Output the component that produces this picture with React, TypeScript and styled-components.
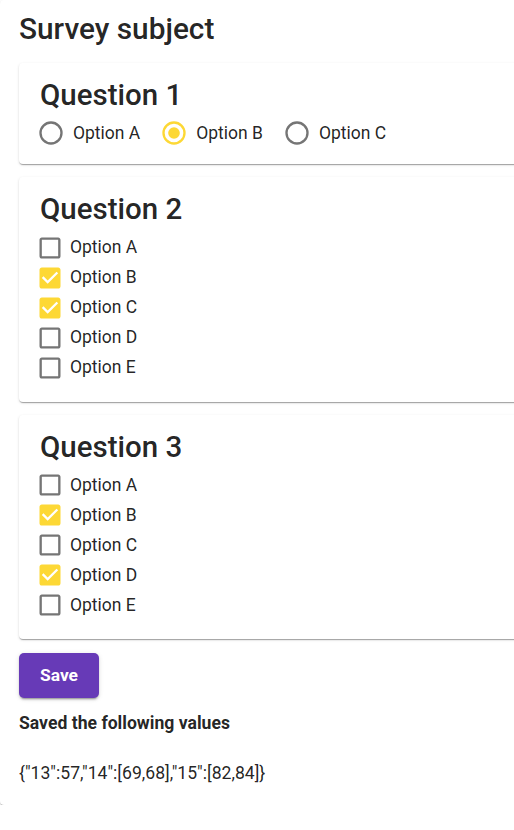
import styled, { createGlobalStyle } from 'styled-components';

const GlobalStyle = createGlobalStyle`
  html, body {
    margin: 0;
    padding: 0;
    overflow: hidden;
    background: #fff;
  }
  body {
    font-family: Roboto, "Noto Sans", sans-serif;
    color: rgba(0, 0, 0, 0.87);
  }
`;

const YELLOW = '#fdd835';
const GREY = '#757575';

interface Question {
  id: number;
  title: string;
  kind: 'radio' | 'checkbox';
  options: { id: number; label: string }[];
}

const questions: Question[] = [
  {
    id: 13,
    title: 'Question 1',
    kind: 'radio',
    options: [
      { id: 56, label: 'Option A' },
      { id: 57, label: 'Option B' },
      { id: 58, label: 'Option C' },
    ],
  },
  {
    id: 14,
    title: 'Question 2',
    kind: 'checkbox',
    options: [
      { id: 67, label: 'Option A' },
      { id: 68, label: 'Option B' },
      { id: 69, label: 'Option C' },
      { id: 70, label: 'Option D' },
      { id: 71, label: 'Option E' },
    ],
  },
  {
    id: 15,
    title: 'Question 3',
    kind: 'checkbox',
    options: [
      { id: 81, label: 'Option A' },
      { id: 82, label: 'Option B' },
      { id: 83, label: 'Option C' },
      { id: 84, label: 'Option D' },
      { id: 85, label: 'Option E' },
    ],
  },
];

const answers: Record<number, number | number[]> = {
  13: 57,
  14: [69, 68],
  15: [82, 84],
};

const isChecked = (qid: number, oid: number) => {
  const a = answers[qid];
  return Array.isArray(a) ? a.includes(oid) : a === oid;
};

const RadioIcon = ({ checked }: { checked: boolean }) => (
  <IconSvg viewBox="0 0 24 24">
    <circle cx="12" cy="12" r="9" fill="none" stroke={checked ? YELLOW : GREY} strokeWidth="2" />
    {checked && <circle cx="12" cy="12" r="5" fill={YELLOW} />}
  </IconSvg>
);

const CheckIcon = ({ checked }: { checked: boolean }) => (
  <IconSvg viewBox="0 0 24 24">
    {checked ? (
      <path
        fill={YELLOW}
        d="M19 3H5c-1.11 0-2 .9-2 2v14c0 1.1.89 2 2 2h14c1.11 0 2-.9 2-2V5c0-1.1-.89-2-2-2zm-9 14l-5-5 1.41-1.41L10 14.170l7.59-7.59L19 8l-9 9z"
      />
    ) : (
      <path
        fill={GREY}
        d="M19 5v14H5V5h14m0-2H5c-1.1 0-2 .9-2 2v14c0 1.1.9 2 2 2h14c1.1 0 2-.9 2-2V5c0-1.1-.9-2-2-2z"
      />
    )}
  </IconSvg>
);

const App = () => {
  return (
    <>
      <GlobalStyle />
      <Page>
        <Title>Survey subject</Title>
        {questions.map((q) => (
          <Card key={q.id}>
            <QuestionTitle>{q.title}</QuestionTitle>
            {q.kind === 'radio' ? (
              <RadioRow>
                {q.options.map((o) => (
                  <RadioItem key={o.id}>
                    <RadioIcon checked={isChecked(q.id, o.id)} />
                    <OptionLabel>{o.label}</OptionLabel>
                  </RadioItem>
                ))}
              </RadioRow>
            ) : (
              <CheckList>
                {q.options.map((o) => (
                  <CheckItem key={o.id}>
                    <CheckIcon checked={isChecked(q.id, o.id)} />
                    <OptionLabel>{o.label}</OptionLabel>
                  </CheckItem>
                ))}
              </CheckList>
            )}
          </Card>
        ))}
        <SaveButton>Save</SaveButton>
        <SavedTitle>Saved the following values</SavedTitle>
        <SavedValues>{JSON.stringify(answers)}</SavedValues>
      </Page>
    </>
  );
};

const Page = styled.div`
  width: 580px;
  box-sizing: border-box;
  padding: 11px 19px 18px;
  background: #fff;
  border-radius: 4px;
  box-shadow: 0px 2px 1px -1px rgba(0, 0, 0, 0.2), 0px 1px 1px 0px rgba(0, 0, 0, 0.14),
    0px 1px 3px 0px rgba(0, 0, 0, 0.12);
  display: flex;
  flex-direction: column;
  align-items: flex-start;
`;

const Title = styled.h1`
  margin: 0 0 16px;
  font-size: 29.8px;
  font-weight: 500;
  line-height: 1.2;
`;

const Card = styled.section`
  align-self: stretch;
  background: #fff;
  border-radius: 4px;
  padding: 15px 21px 16px;
  margin-bottom: 13px;
  box-shadow: 0px 2px 1px -1px rgba(0, 0, 0, 0.2), 0px 1px 1px 0px rgba(0, 0, 0, 0.14),
    0px 1px 3px 0px rgba(0, 0, 0, 0.12);
`;

const QuestionTitle = styled.h2`
  margin: 0 0 5px;
  font-size: 29.5px;
  font-weight: 500;
  line-height: 1.2;
`;

const IconSvg = styled.svg`
  width: 28px;
  height: 28px;
  flex-shrink: 0;
`;

const RadioRow = styled.div`
  display: flex;
  align-items: center;
  margin-left: -3px;
  height: 30px;
`;

const RadioItem = styled.label`
  display: flex;
  align-items: center;
  gap: 8px;
  margin-right: 20px;
`;

const CheckList = styled.div`
  display: flex;
  flex-direction: column;
  margin: 1px 0 0 -4px;
  padding-bottom: 3px;
`;

const CheckItem = styled.label`
  display: flex;
  align-items: center;
  gap: 6px;
  height: 30px;
`;

const OptionLabel = styled.span`
  font-size: 17.5px;
  line-height: 1.5;
`;

const SaveButton = styled.button`
  margin-top: 1px;
  width: 80px;
  height: 45px;
  border: none;
  border-radius: 5px;
  background: #673ab7;
  color: #fff;
  font-family: Roboto, sans-serif;
  font-size: 17.4px;
  font-weight: 700;
  box-shadow: 0px 3px 1px -2px rgba(0, 0, 0, 0.2), 0px 2px 2px 0px rgba(0, 0, 0, 0.14),
    0px 1px 5px 0px rgba(0, 0, 0, 0.12);
`;

const SavedTitle = styled.p`
  margin: 12px 0 0;
  font-size: 17.6px;
  font-weight: 700;
  line-height: 1.5;
`;

const SavedValues = styled.p`
  margin: 24px 0 0;
  font-size: 17.6px;
  line-height: 1.5;
`;

export default App;
